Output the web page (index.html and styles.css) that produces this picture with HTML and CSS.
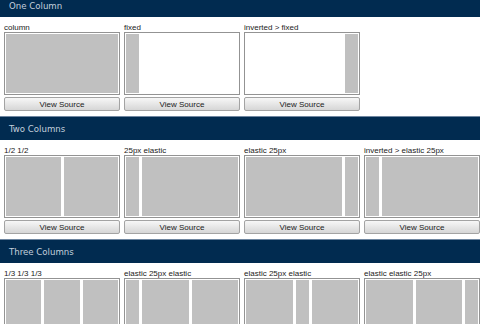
FILE: index.html
```html
<!DOCTYPE html>
<html lang="en">
<head>
    <meta charset="UTF-8">
    <meta name="viewport" content="width=device-width, initial-scale=1.0">
    <title>Layouts</title>
    <link rel="stylesheet" href="styles.css">
</head>
<body>
    <div class="page">
        <h2 class="section-title">One Column</h2>
        <div class="grid">
            <div class="item">
                <span class="label">column</span>
                <div class="preview"><div class="col"></div></div>
                <button>View Source</button>
            </div>
            <div class="item">
                <span class="label">fixed</span>
                <div class="preview blank"><div class="col narrow"></div></div>
                <button>View Source</button>
            </div>
            <div class="item">
                <span class="label">inverted &gt; fixed</span>
                <div class="preview blank end"><div class="col narrow"></div></div>
                <button>View Source</button>
            </div>
        </div>

        <h2 class="section-title">Two Columns</h2>
        <div class="grid">
            <div class="item">
                <span class="label">1/2 1/2</span>
                <div class="preview"><div class="col"></div><div class="col"></div></div>
                <button>View Source</button>
            </div>
            <div class="item">
                <span class="label">25px elastic</span>
                <div class="preview"><div class="col narrow"></div><div class="col"></div></div>
                <button>View Source</button>
            </div>
            <div class="item">
                <span class="label">elastic 25px</span>
                <div class="preview"><div class="col"></div><div class="col narrow"></div></div>
                <button>View Source</button>
            </div>
            <div class="item">
                <span class="label">inverted &gt; elastic 25px</span>
                <div class="preview"><div class="col narrow"></div><div class="col"></div></div>
                <button>View Source</button>
            </div>
        </div>

        <h2 class="section-title">Three Columns</h2>
        <div class="grid">
            <div class="item">
                <span class="label">1/3 1/3 1/3</span>
                <div class="preview"><div class="col"></div><div class="col"></div><div class="col"></div></div>
                <button>View Source</button>
            </div>
            <div class="item">
                <span class="label">elastic 25px elastic</span>
                <div class="preview"><div class="col narrow"></div><div class="col"></div><div class="col"></div></div>
                <button>View Source</button>
            </div>
            <div class="item">
                <span class="label">elastic 25px elastic</span>
                <div class="preview"><div class="col"></div><div class="col narrow"></div><div class="col"></div></div>
                <button>View Source</button>
            </div>
            <div class="item">
                <span class="label">elastic elastic 25px</span>
                <div class="preview"><div class="col"></div><div class="col"></div><div class="col narrow"></div></div>
                <button>View Source</button>
            </div>
        </div>
    </div>
</body>
</html>
```

FILE: styles.css
```css
body {
    margin: 0;
    background: #fff;
    font-family: "Liberation Sans", Arial, sans-serif;
    color: #222;
}
.page {
    margin-top: -7px;
}
.section-title {
    margin: 0;
    height: 23px;
    border-top: 1px solid #6f86a0;
    background-color: #012b50;
    color: #c3cfdc;
    font-family: "DejaVu Sans", Verdana, sans-serif;
    font-size: 8.6px;
    font-weight: normal;
    line-height: 25px;
    padding-left: 9px;
}
.grid {
    display: grid;
    grid-template-columns: repeat(4, 116px);
    column-gap: 4px;
    padding: 0 0 5px 4px;
}
.item {
    display: flex;
    flex-direction: column;
}
.label {
    display: block;
    height: 15px;
    font-size: 8px;
    line-height: 22px;
    white-space: nowrap;
}
.preview {
    display: flex;
    gap: 3px;
    height: 59px;
    border: 1px solid #939393;
    padding: 1px;
    background: #fff;
}
.col {
    flex: 1;
    background-color: #c0c0c0;
}
.col.narrow {
    flex: 0 0 13px;
}
.preview.end {
    justify-content: flex-end;
}
button {
    margin-top: 2px;
    height: 14px;
    padding: 0;
    border: 1px solid #a3a3a3;
    border-radius: 2px;
    background: linear-gradient(#f7f7f7, #d6d6d6);
    font-family: "Liberation Sans", Arial, sans-serif;
    font-size: 8px;
    color: #1a1a1a;
    cursor: pointer;
}
```
